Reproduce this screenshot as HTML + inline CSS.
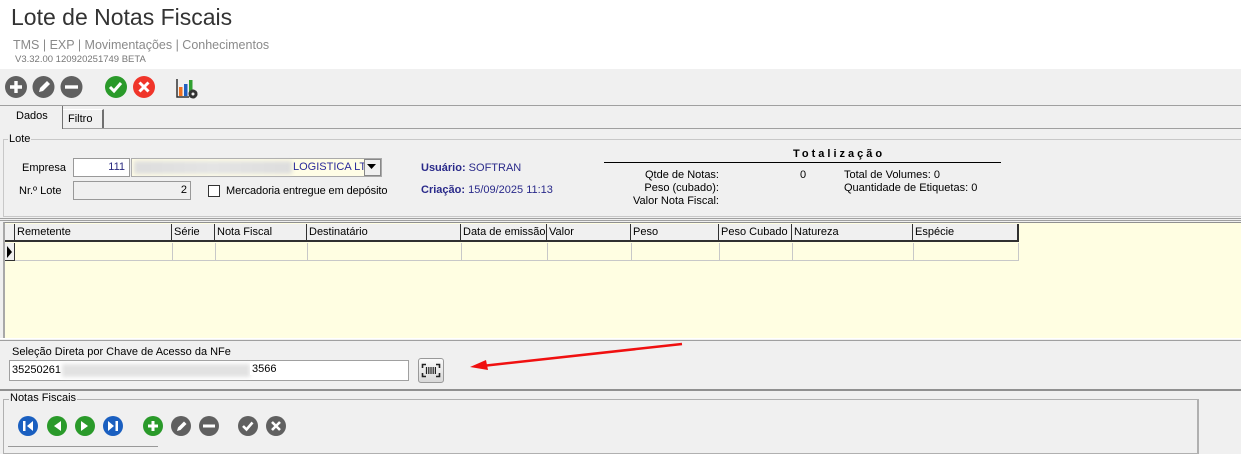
<!DOCTYPE html>
<html><head><meta charset="utf-8"><style>
*{box-sizing:border-box;margin:0;padding:0}
body{width:1241px;height:448px;overflow:hidden;background:#f0f0f0;font-family:"Liberation Sans",sans-serif;font-size:11px;color:#000;position:relative}
.a{position:absolute}
.hdr{left:0;top:0;width:1241px;height:69px;background:#fff}
.hc{position:absolute;top:224px;height:18px;border-right:2px solid #303030;border-bottom:2px solid #303030;background:#f0f0f0;padding:2px 0 0 2px;font-size:11px;white-space:nowrap}
.cell{position:absolute;top:243px;height:18px;border-right:1px solid #c8c8c8;border-bottom:1px solid #c8c8c8}
</style></head><body>
<div class="a hdr"></div>
<div class="a" style="left:11px;top:4px;font-size:23px;color:#333">Lote de Notas Fiscais</div>
<div class="a" style="left:13px;top:38px;font-size:12.5px;color:#8a8a8a">TMS | EXP | Movimentações | Conhecimentos</div>
<div class="a" style="left:15px;top:54px;font-size:9.5px;color:#777">V3.32.00 120920251749 BETA</div>

<svg class="a" style="left:0;top:73px" width="210" height="30">
<g fill="#606060"><circle cx="16" cy="14" r="11"/><circle cx="43.5" cy="14" r="11"/><circle cx="71.5" cy="14" r="11"/></g>
<path d="M16 8v12M10 14h12" stroke="#fff" stroke-width="3.4"/>
<path d="M39 19l1-4 7-7 3 3-7 7z" fill="#fff"/>
<path d="M65 14h13" stroke="#fff" stroke-width="3.4"/>
<circle cx="116" cy="14" r="11" fill="#2a9a2a"/><path d="M110 14l4 4 7-8" stroke="#fff" stroke-width="3" fill="none"/>
<circle cx="144" cy="14" r="11" fill="#f0352a"/><path d="M139.5 9.5l9 9M148.5 9.5l-9 9" stroke="#fff" stroke-width="3"/>
<path d="M177 6v18h12" stroke="#333" stroke-width="1.5" fill="none"/>
<rect x="179" y="14" width="3.5" height="9" fill="#f07020"/><rect x="184" y="11" width="3.5" height="12" fill="#2060c0"/><rect x="189" y="7" width="3.5" height="12" fill="#30a030"/>
<circle cx="193" cy="21" r="4.5" fill="#333"/><circle cx="193" cy="21" r="3" fill="none" stroke="#333" stroke-width="3" stroke-dasharray="1.6 1.6"/><circle cx="193" cy="21" r="1.5" fill="#f0f0f0"/>
</svg>
<div class="a" style="left:0;top:105px;width:1241px;border-top:1px solid #a0a0a0"></div>
<div class="a" style="left:0;top:128px;width:1241px;border-top:1px solid #a0a0a0"></div>
<div class="a" style="left:0;top:106px;width:63px;height:23px;background:#f0f0f0;border-right:1px solid #707070"></div>
<div class="a" style="left:16px;top:110px;font-size:11px">Dados</div>
<div class="a" style="left:63px;top:109px;width:41px;height:19px;border-top:1px solid #fff;border-right:2px solid #707070"></div>
<div class="a" style="left:68px;top:113px;font-size:11px">Filtro</div>

<div class="a" style="left:3px;top:139px;width:1240px;height:78px;border:1px solid #c8c8c8;border-right:none"></div>
<div class="a" style="left:8px;top:133px;background:#f0f0f0;padding:0 1px">Lote</div>
<div class="a" style="left:22px;top:162px">Empresa</div>
<div class="a" style="left:73px;top:158px;width:57px;height:19px;background:#fff;border:1px solid #999;text-align:right;padding:2px 4px;color:#2a2a80">111</div>
<div class="a" style="left:131px;top:158px;width:251px;height:19px;background:#fffde6;border:1px solid #aaa"></div>
<div class="a" style="left:134px;top:161px;width:158px;height:13px;background:linear-gradient(90deg,#ddd,#e4e4e4,#ddd);filter:blur(2px)"></div>
<div class="a" style="left:293px;top:161px;color:#2a2a9a">LOGISTICA LT</div>
<div class="a" style="left:364px;top:159px;width:17px;height:17px;background:#f0f0f0;border:1px solid #888"></div>
<svg class="a" style="left:367px;top:164px" width="10" height="6"><path d="M0 0h9l-4.5 5z" fill="#000"/></svg>
<div class="a" style="left:19px;top:185px">Nr.º Lote</div>
<div class="a" style="left:73px;top:181px;width:118px;height:19px;background:#f0f0f0;border:1px solid #999;text-align:right;padding:2px 3px">2</div>
<div class="a" style="left:208px;top:185px;width:12px;height:12px;background:#fff;border:1px solid #333"></div>
<div class="a" style="left:226px;top:185px;letter-spacing:-0.1px">Mercadoria entregue em depósito</div>
<div class="a" style="left:421px;top:162px;color:#2a2a8a"><b>Usuário:</b> SOFTRAN</div>
<div class="a" style="left:421px;top:184px;color:#2a2a8a"><b>Criação:</b> 15/09/2025 11:13</div>
<div class="a" style="left:793px;top:148px;font-weight:bold;letter-spacing:3px">Totalização</div>
<div class="a" style="left:604px;top:162px;width:397px;border-top:1px solid #000"></div>
<div class="a" style="left:560px;top:169px;width:159px;text-align:right;line-height:13px">Qtde de Notas:<br>Peso (cubado):<br>Valor Nota Fiscal:</div>
<div class="a" style="left:800px;top:169px">0</div>
<div class="a" style="left:844px;top:169px;line-height:13px">Total de Volumes: 0<br>Quantidade de Etiquetas: 0</div>

<div class="a" style="left:0;top:218px;width:1241px;border-top:1px solid #a0a0a0;border-bottom:1px solid #a0a0a0;height:3px"></div>
<div class="a" style="left:3px;top:222px;width:1238px;height:117px;background:#fffee2;border-left:2px solid #a8a8a8;border-top:1px solid #909090"></div>
<div class="hc" style="left:5px;width:11px"></div>
<div class="hc" style="left:15px;width:158px">Remetente</div>
<div class="hc" style="left:172px;width:44px">Série</div>
<div class="hc" style="left:215px;width:93px">Nota Fiscal</div>
<div class="hc" style="left:307px;width:155px">Destinatário</div>
<div class="hc" style="left:461px;width:87px">Data de emissão</div>
<div class="hc" style="left:547px;width:85px">Valor</div>
<div class="hc" style="left:631px;width:89px">Peso</div>
<div class="hc" style="left:719px;width:74px">Peso Cubado</div>
<div class="hc" style="left:792px;width:122px">Natureza</div>
<div class="hc" style="left:913px;width:106px">Espécie</div>
<div class="a" style="left:5px;top:243px;width:10px;height:18px;background:#f0f0f0;border-right:1px solid #303030;border-bottom:1px solid #303030"></div>
<svg class="a" style="left:7px;top:246px" width="6" height="12"><path d="M0 0l5 6-5 6z" fill="#000"/></svg>
<div class="cell" style="left:15px;width:158px"></div>
<div class="cell" style="left:172px;width:44px"></div>
<div class="cell" style="left:215px;width:93px"></div>
<div class="cell" style="left:307px;width:155px"></div>
<div class="cell" style="left:461px;width:87px"></div>
<div class="cell" style="left:547px;width:85px"></div>
<div class="cell" style="left:631px;width:89px"></div>
<div class="cell" style="left:719px;width:74px"></div>
<div class="cell" style="left:792px;width:122px"></div>
<div class="cell" style="left:913px;width:106px"></div>
<div class="a" style="left:0;top:338px;width:1241px;border-top:1px solid #fff;border-bottom:1px solid #a0a0a0;height:3px"></div>

<div class="a" style="left:12px;top:346px">Seleção Direta por Chave de Acesso da NFe</div>
<div class="a" style="left:9px;top:360px;width:400px;height:21px;background:#fff;border:1px solid #a0a0a0;padding:3px 2px">35250261</div>
<div class="a" style="left:62px;top:364px;width:188px;height:13px;background:#e2e2e2;filter:blur(2px)"></div>
<div class="a" style="left:250px;top:363px;background:#fff;padding-left:2px">3566</div>
<div class="a" style="left:418px;top:358px;width:26px;height:25px;border:1px solid #999;border-radius:3px;background:linear-gradient(#fafafa,#d8d8d8)"></div>
<svg class="a" style="left:418px;top:358px" width="26" height="25"><path d="M4.5 10V6.5h3.5M18 6.5h3.5V10M4.5 15v3.5h3.5M18 18.5h3.5V15" stroke="#222" stroke-width="1.6" fill="none"/><path d="M8.5 9v7M10.8 9v7M13 9v7M15.2 9v7M17.4 9v7" stroke="#222" stroke-width="1.2"/></svg>
<svg class="a" style="left:460px;top:338px" width="230" height="36"><path d="M222 6L22 28" stroke="#f01010" stroke-width="2.5"/><path d="M10 29l16-7 2 10z" fill="#f01010"/></svg>
<div class="a" style="left:0;top:389px;width:1241px;border-top:2px solid #909090"></div>

<div class="a" style="left:3px;top:399px;width:1196px;height:55px;border:1px solid #b0b0b0;border-right:2px solid #b0b0b0"></div>
<div class="a" style="left:9px;top:392px;background:#f0f0f0;padding:0 1px">Notas Fiscais</div>
<svg class="a" style="left:0;top:414px" width="300" height="25">
<g fill="#1a5fc0"><circle cx="28" cy="12" r="10"/><circle cx="113" cy="12" r="10"/></g>
<g fill="#2a9a2a"><circle cx="57" cy="12" r="10"/><circle cx="85" cy="12" r="10"/><circle cx="153" cy="12" r="10"/></g>
<g fill="#606060"><circle cx="181" cy="12" r="10"/><circle cx="209" cy="12" r="10"/><circle cx="248" cy="12" r="10"/><circle cx="276" cy="12" r="10"/></g>
<g fill="#fff"><rect x="23" y="7" width="2.5" height="10"/><path d="M33 7v10l-6-5z"/><path d="M61 7v10l-7-5z"/><path d="M81 7v10l7-5z"/><path d="M108 7v10l6-5z"/><rect x="115.5" y="7" width="2.5" height="10"/><path d="M177 17l1-3.5 6-6 2.5 2.5-6 6z"/></g>
<path d="M153 7v10M148 12h10M203 12h12" stroke="#fff" stroke-width="3"/>
<path d="M243 12l3.5 3.5 6-7" stroke="#fff" stroke-width="2.6" fill="none"/>
<path d="M272 8l8 8M280 8l-8 8" stroke="#fff" stroke-width="2.6"/>
</svg>
<div class="a" style="left:8px;top:446px;width:150px;border-top:1px solid #999"></div>
</body></html>
